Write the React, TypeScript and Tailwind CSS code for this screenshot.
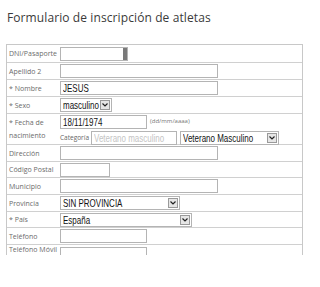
import React from "react";

const labelCls =
  "w-[53px] shrink-0 pl-[2px] text-[7px] leading-[9px] text-[#6b6b6b] [font-family:'Open_Sans',sans-serif]";
const inputCls =
  "h-[14px] border border-[#b4b4b4] bg-white flex items-center pl-[2px] text-[10.5px] text-[#111] [font-family:'Liberation_Sans',Arial,sans-serif] overflow-hidden whitespace-nowrap";

function T({ children }: { children: React.ReactNode }) {
  return (
    <span className="flex-1 min-w-0 overflow-hidden leading-[12px]">
      <span className="inline-block origin-left scale-x-[0.76] whitespace-nowrap">{children}</span>
    </span>
  );
}

function Chevron() {
  return (
    <span className="ml-auto mr-[1px] h-[10px] w-[10px] border border-[#9a9a9a] bg-[#e6e6e6] flex items-center justify-center shrink-0">
      <svg width="6" height="4" viewBox="0 0 6 4">
        <path d="M0.5 0.5 L3 3 L5.5 0.5" fill="none" stroke="#222" strokeWidth="1.2" />
      </svg>
    </span>
  );
}

function Row({
  label,
  h,
  children,
  top = false,
}: {
  label: React.ReactNode;
  h: string;
  children?: React.ReactNode;
  top?: boolean;
}) {
  return (
    <div className={`flex ${top ? "items-start" : "items-center"} border-b border-[#d0d0d0] ${h}`}>
      <div className={labelCls}>{label}</div>
      <div className="flex-1 min-w-0">{children}</div>
    </div>
  );
}

export default function App() {
  return (
    <div className="w-[320px] h-[287px] bg-white overflow-hidden">
      <div className="pt-[11px] pl-[7px] text-[12px] leading-[14px] text-[#3a3a3a] [font-family:'Open_Sans',sans-serif] tracking-[0.1px]">
        Formulario de inscripción de atletas
      </div>
      <div className="mt-[19px] ml-[6px] w-[297px] h-[211px] overflow-hidden border-t border-x border-[#c8c8c8]">
        <Row label="DNI/Pasaporte" h="h-[18px]">
          <div className={`${inputCls} w-[68px] pr-0`}>
            <span className="ml-auto h-full w-[4px] bg-[#7a7a7a]" />
          </div>
        </Row>
        <Row label="Apellido 2" h="h-[17px]">
          <div className={`${inputCls} w-[158px]`} />
        </Row>
        <Row label="* Nombre" h="h-[17px]">
          <div className={`${inputCls} w-[158px]`}>
            <T>JESUS</T>
          </div>
        </Row>
        <Row label="* Sexo" h="h-[17px]">
          <div className={`${inputCls} w-[52px] h-[13px]`}>
            <T>masculino</T>
            <Chevron />
          </div>
        </Row>
        <Row
          label={
            <div className="pt-[2px] leading-[13px]">
              * Fecha de
              <br />
              nacimiento
            </div>
          }
          h="h-[31px]"
          top
        >
          <div className="flex flex-col gap-[2px] pt-[1px]">
            <div className="flex items-start gap-[3px]">
              <div className={`${inputCls} w-[87px] h-[13px]`}>
                <T>18/11/1974</T>
              </div>
              <span className="text-[6px] leading-[13px] text-[#777] [font-family:'Open_Sans',sans-serif]">
                (dd/mm/aaaa)
              </span>
            </div>
            <div className="flex items-center">
              <span className="w-[31px] text-[6.5px] text-[#666] [font-family:'Open_Sans',sans-serif]">
                Categoría
              </span>
              <div className={`${inputCls} w-[86px] h-[13px] !text-[#c4c4c4]`}>
                <T>Veterano masculino</T>
              </div>
              <div className={`${inputCls} ml-[3px] w-[99px] h-[13px]`}>
                <T>Veterano Masculino</T>
                <Chevron />
              </div>
            </div>
          </div>
        </Row>
        <Row label="Dirección" h="h-[17px]">
          <div className={`${inputCls} w-[158px]`} />
        </Row>
        <Row label="Código Postal" h="h-[16px]">
          <div className={`${inputCls} w-[50px]`} />
        </Row>
        <Row label="Municipio" h="h-[17px]">
          <div className={`${inputCls} w-[158px]`} />
        </Row>
        <Row label="Provincia" h="h-[17px]">
          <div className={`${inputCls} w-[120px] h-[12px]`}>
            <T>SIN PROVINCIA</T>
            <Chevron />
          </div>
        </Row>
        <Row label="* País" h="h-[16px]">
          <div className={`${inputCls} w-[132px] h-[12px]`}>
            <T>España</T>
            <Chevron />
          </div>
        </Row>
        <Row label="Teléfono" h="h-[17px]">
          <div className={`${inputCls} w-[87px]`} />
        </Row>
        <Row label="Teléfono Móvil" h="h-[17px]" top>
          <div className={`${inputCls} mt-[2px] w-[87px]`} />
        </Row>
      </div>
    </div>
  );
}
